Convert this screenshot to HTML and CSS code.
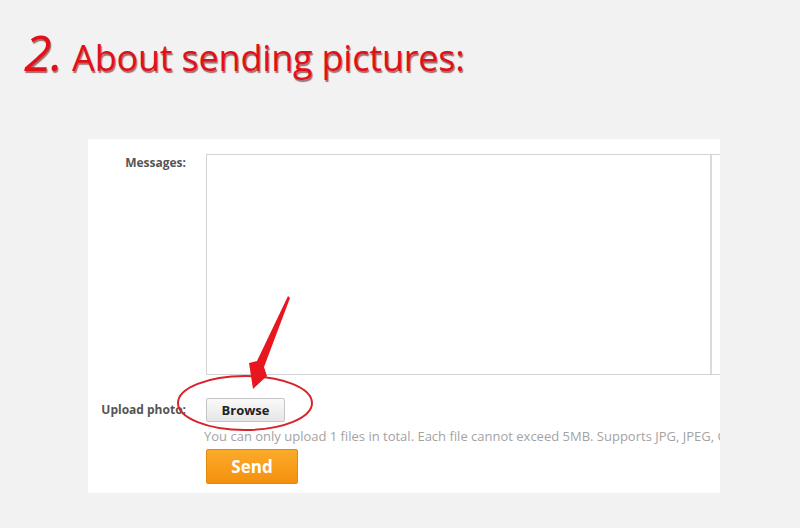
FILE: index.html
```html
<!DOCTYPE html>
<html>
<head>
<meta charset="utf-8">
<link rel="stylesheet" href="styles.css">
</head>
<body>
<div class="page">
  <h1 class="title"><span class="num">2.</span><span class="head">About sending pictures:</span></h1>
  <div class="panel">
    <div class="row row-msg">
      <div class="label">Messages:</div>
      <div class="ta"><div class="ta-body"></div><div class="ta-gutter"></div></div>
    </div>
    <div class="row row-upload">
      <div class="label">Upload photo:</div>
      <div class="field">
        <button class="browse">Browse</button>
        <div class="hint">You can only upload 1 files in total. Each file cannot exceed 5MB. Supports JPG, JPEG, GIF, PNG, BMP.</div>
        <button class="send">Send</button>
      </div>
    </div>
  </div>
  <svg class="annot" width="800" height="528" viewBox="0 0 800 528">
    <ellipse cx="245" cy="403" rx="67" ry="27" fill="none" stroke="#d8232a" stroke-width="2"/>
    <polygon points="288,296 290,298 264,367 267,376 253,389 249,363 257,361" fill="#e8161f"/>
  </svg>
</div>
</body>
</html>
```
FILE: styles.css
```css
html, body {
  margin: 0;
  padding: 0;
  background: #f2f2f2;
}
.page {
  position: relative;
  width: 800px;
  height: 528px;
  overflow: hidden;
}
.title {
  margin: 0;
  padding: 24px 0 0 24px;
  height: 139px;
  box-sizing: border-box;
  display: flex;
  align-items: baseline;
  font-family: "Open Sans", "Noto Sans", sans-serif;
  font-weight: 400;
  color: #e3101a;
  text-shadow: 1px 2px 1px rgba(90, 0, 0, 0.55);
}
.num {
  font-size: 50px;
  font-style: italic;
  letter-spacing: -1px;
  margin-right: 10px;
  line-height: 56px;
}
.head {
  font-size: 36px;
  line-height: 56px;
  letter-spacing: -0.2px;
}
.panel {
  margin-left: 88px;
  width: 632px;
  height: 354px;
  background: #fff;
  box-sizing: border-box;
  padding-top: 15px;
  overflow: hidden;
  font-family: "Open Sans", "Noto Sans", sans-serif;
}
.row {
  display: flex;
}
.label {
  width: 98px;
  flex: none;
  text-align: right;
  padding-right: 20px;
  font-size: 12px;
  font-weight: 700;
  color: #555;
}
.row-msg .label {
  padding-top: 0;
}
.ta {
  width: 540px;
  flex: none;
  height: 221px;
  box-sizing: border-box;
  border: 1px solid #d3d3d3;
  display: flex;
}
.ta-body {
  width: 503px;
  flex: none;
}
.ta-gutter {
  flex: 1;
  border-left: 2px solid #dadada;
}
.row-upload {
  margin-top: 23px;
}
.row-upload .label {
  padding-top: 3px;
}
.field {
  display: flex;
  flex-direction: column;
  align-items: flex-start;
  width: 600px;
  flex: none;
}
.browse {
  width: 79px;
  height: 24px;
  margin: 0;
  padding: 0;
  border: 1px solid #c4c4c4;
  border-radius: 2px;
  background: linear-gradient(#fafafa, #e6e6e6);
  font-family: "Open Sans", "Noto Sans", sans-serif;
  font-size: 13px;
  font-weight: 700;
  color: #222;
}
.hint {
  margin-top: 6px;
  margin-left: -2px;
  font-size: 13px;
  line-height: 16px;
  color: #a3a3a3;
  white-space: nowrap;
}
.send {
  margin-top: 5px;
  width: 92px;
  height: 35px;
  padding: 0;
  border: 1px solid #e08a10;
  border-radius: 2px;
  background: linear-gradient(#fbab2a, #f5900f);
  color: #fff;
  font-family: "Open Sans", "Noto Sans", sans-serif;
  font-size: 17px;
  font-weight: 700;
}
.annot {
  position: absolute;
  left: 0;
  top: 0;
  pointer-events: none;
}
```
